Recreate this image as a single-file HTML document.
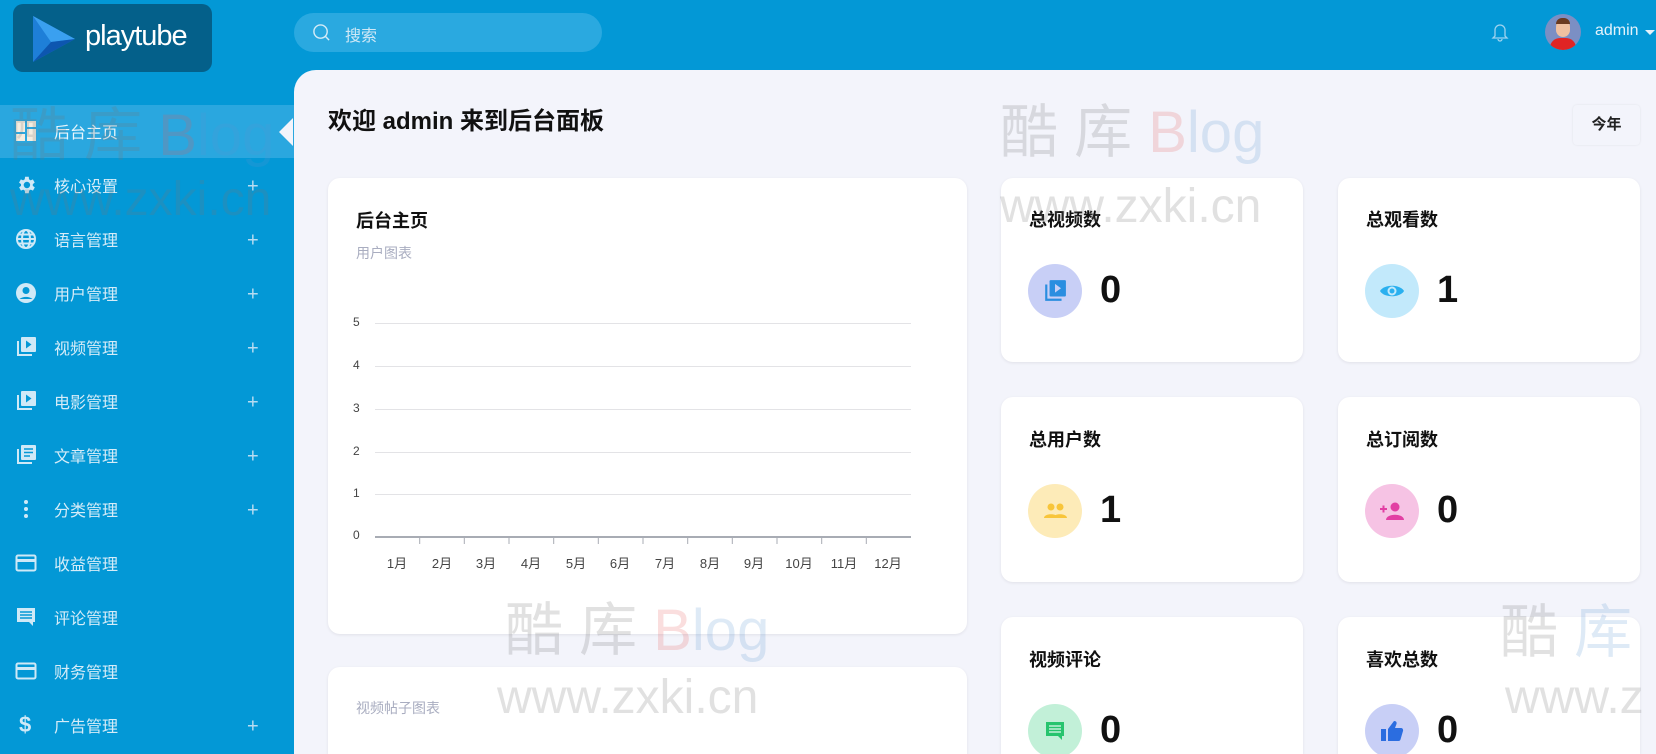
<!DOCTYPE html>
<html><head><meta charset="utf-8">
<style>
*{box-sizing:border-box;margin:0;padding:0}
html{width:1656px;height:754px;overflow:hidden}
body{width:1656px;height:754px;overflow:hidden;background:#0398d6;font-family:"Liberation Sans","Noto Sans CJK SC",sans-serif;position:relative}
.abs{position:absolute}
.logo{left:13px;top:4px;width:199px;height:68px;background:#04608a;border-radius:10px}
.logo span{position:absolute;left:72px;top:16px;color:#fff;font-size:29px;letter-spacing:-1px}
.search{left:294px;top:13px;width:308px;height:39px;border-radius:20px;background:#2aa9e0}
.search span{position:absolute;left:51px;top:9px;color:#cfe8f6;font-size:16px}
.main{left:294px;top:70px;width:1362px;height:684px;background:#f3f4fb;border-top-left-radius:22px}
.nav{left:0;width:294px;height:54px}
.nav .t{position:absolute;left:54px;top:50%;transform:translateY(-50%);color:#d6ecf8;font-size:16px}
.nav .p{position:absolute;left:247px;top:50%;transform:translateY(-42%);color:#b7dcf1;font-size:20px;font-weight:300;line-height:1}
.nav svg{position:absolute;left:15px;top:50%;transform:translateY(-50%)}
.card{background:#fff;border-radius:12px;box-shadow:0 1px 3px rgba(0,0,0,.08)}
.ct{font-size:18px;font-weight:bold;color:#111}
.ic{width:54px;height:54px;border-radius:50%;display:flex;align-items:center;justify-content:center}
.num{font-size:38px;font-weight:bold;color:#111}
.yl{position:absolute;left:353px;font-size:12px;color:#444}
.gl{position:absolute;left:375px;width:536px;height:1px;background:#e3e3e6}
.ml{position:absolute;top:553px;font-size:13px;color:#444;width:40px;text-align:center}
.wm{position:absolute;color:rgba(120,120,120,.22);font-size:58px;white-space:nowrap;pointer-events:none}
.wm b{font-weight:normal;color:rgba(90,150,210,.2)}
.wm i{font-style:normal;color:rgba(230,90,90,.2)}
</style></head><body>
<div class="abs logo">
<svg class="abs" style="left:16px;top:8px" width="52" height="54" viewBox="0 0 52 54"><path d="M4 4 L46 27 L4 50 Z" fill="#1e7fd8"/><path d="M4 4 L46 27 L22 30 Z" fill="#3aa0f0"/><path d="M4 50 L22 30 L46 27Z" fill="#0d56b0"/></svg>
<span>playtube</span></div>
<div class="abs search"><svg class="abs" style="left:18px;top:10px" width="19" height="19" viewBox="0 0 20 20"><circle cx="9" cy="9" r="7" fill="none" stroke="#d4ebf7" stroke-width="1.5"/><path d="M14 14l4 4" stroke="#d4ebf7" stroke-width="1.5"/></svg><span>搜索</span></div>
<svg class="abs" style="left:1491px;top:22px" width="18" height="20" viewBox="0 0 18 20"><path d="M4 14V8a5 5 0 0110 0v6l2 2H2z M7 17a2 2 0 004 0" fill="none" stroke="#9fd3ef" stroke-width="1.3"/></svg>
<div class="abs" style="left:1545px;top:14px;width:36px;height:36px;border-radius:50%;background:#7b8fc4;overflow:hidden"><div class="abs" style="left:11px;top:6px;width:14px;height:17px;border-radius:7px;background:#f0c0a0"></div><div class="abs" style="left:11px;top:4px;width:14px;height:6px;border-radius:6px 6px 0 0;background:#6b3a20"></div><div class="abs" style="left:5px;top:24px;width:26px;height:16px;border-radius:10px 10px 0 0;background:#e02424"></div></div>
<div class="abs" style="left:1595px;top:22px;color:#e3f2fb;font-size:16px">admin</div>
<div class="abs" style="left:1645px;top:30px;border:5px solid transparent;border-top-color:#e3f2fb;border-bottom:0"></div>

<div class="abs main"></div>
<div class="abs" style="left:0;top:105px;width:294px;height:53px;background:#2aa7df"></div>
<div class="abs" style="left:279px;top:118px;border:14px solid transparent;border-right-color:#f3f4fb;border-left:0;height:0"></div>

<div class="abs nav" style="top:104px"><svg width="22" height="22" viewBox="0 0 22 22"><rect x="1" y="1" width="9" height="11" fill="#f4ede0"/><rect x="12" y="1" width="9" height="6" fill="#f4ede0"/><rect x="1" y="14" width="9" height="7" fill="#f4ede0"/><rect x="12" y="9" width="9" height="12" fill="#f4ede0"/></svg><span class="t" style="color:#eaf6fc">后台主页</span></div>
<div class="abs nav" style="top:158px"><svg width="22" height="22" viewBox="0 0 24 24"><path fill="#cfe9f7" d="M19.4 13a7.5 7.5 0 000-2l2.1-1.6-2-3.5-2.5 1a7 7 0 00-1.7-1L15 3h-4l-.4 2.9a7 7 0 00-1.7 1l-2.5-1-2 3.5L6.6 11a7.5 7.5 0 000 2l-2.1 1.6 2 3.5 2.5-1a7 7 0 001.7 1L11 21h4l.4-2.9a7 7 0 001.7-1l2.5 1 2-3.5zM13 15.5a3.5 3.5 0 110-7 3.5 3.5 0 010 7z"/></svg><span class="t">核心设置</span><span class="p">+</span></div>
<div class="abs nav" style="top:212px"><svg width="22" height="22" viewBox="0 0 22 22"><g fill="none" stroke="#cfe9f7" stroke-width="2"><circle cx="11" cy="11" r="9"/><ellipse cx="11" cy="11" rx="4" ry="9"/><path d="M2 11h18M3.5 6.5h15M3.5 15.5h15"/></g></svg><span class="t">语言管理</span><span class="p">+</span></div>
<div class="abs nav" style="top:266px"><svg width="22" height="22" viewBox="0 0 22 22"><circle cx="11" cy="11" r="10" fill="#cfe9f7"/><circle cx="11" cy="8.5" r="3.5" fill="#0398d6"/><path d="M4.5 17a8 5 0 0113 0" fill="#0398d6"/></svg><span class="t">用户管理</span><span class="p">+</span></div>
<div class="abs nav" style="top:320px"><svg width="22" height="22" viewBox="0 0 22 22"><path d="M2 5v15h15v-2H4V5z" fill="#cfe9f7"/><rect x="6" y="1" width="15" height="15" rx="1" fill="#cfe9f7"/><path d="M11 4.5v8l5.5-4z" fill="#0398d6"/></svg><span class="t">视频管理</span><span class="p">+</span></div>
<div class="abs nav" style="top:374px"><svg width="22" height="22" viewBox="0 0 22 22"><path d="M2 5v15h15v-2H4V5z" fill="#cfe9f7"/><rect x="6" y="1" width="15" height="15" rx="1" fill="#cfe9f7"/><path d="M11 4.5v8l5.5-4z" fill="#0398d6"/></svg><span class="t">电影管理</span><span class="p">+</span></div>
<div class="abs nav" style="top:428px"><svg width="22" height="22" viewBox="0 0 22 22"><path d="M2 5v15h15v-2H4V5z" fill="#cfe9f7"/><rect x="6" y="1" width="15" height="15" rx="1" fill="#cfe9f7"/><path d="M9 5h9M9 8.5h9M9 12h6" stroke="#0398d6" stroke-width="1.6"/></svg><span class="t">文章管理</span><span class="p">+</span></div>
<div class="abs nav" style="top:482px"><svg width="22" height="22" viewBox="0 0 22 22"><circle cx="11" cy="4" r="2" fill="#cfe9f7"/><circle cx="11" cy="11" r="2" fill="#cfe9f7"/><circle cx="11" cy="18" r="2" fill="#cfe9f7"/></svg><span class="t">分类管理</span><span class="p">+</span></div>
<div class="abs nav" style="top:536px"><svg width="22" height="22" viewBox="0 0 22 22"><rect x="1.5" y="3.5" width="19" height="15" rx="1.5" fill="none" stroke="#cfe9f7" stroke-width="2"/><rect x="2" y="7" width="18" height="3" fill="#cfe9f7"/></svg><span class="t">收益管理</span></div>
<div class="abs nav" style="top:590px"><svg width="22" height="22" viewBox="0 0 22 22"><path d="M2 2h18v14h-2v4l-4-4H2z" fill="#cfe9f7"/><path d="M5 6h12M5 9h12M5 12h12" stroke="#0398d6" stroke-width="1.5"/></svg><span class="t">评论管理</span></div>
<div class="abs nav" style="top:644px"><svg width="22" height="22" viewBox="0 0 22 22"><rect x="1.5" y="3.5" width="19" height="15" rx="1.5" fill="none" stroke="#cfe9f7" stroke-width="2"/><rect x="2" y="7" width="18" height="3" fill="#cfe9f7"/></svg><span class="t">财务管理</span></div>
<div class="abs nav" style="top:698px"><span class="abs" style="left:19px;top:50%;transform:translateY(-50%);color:#cfe9f7;font-size:22px;font-weight:bold">$</span><span class="t">广告管理</span><span class="p">+</span></div>

<div class="abs" style="left:328px;top:101px;font-size:24px;font-weight:bold;color:#111">欢迎 admin 来到后台面板</div>
<div class="abs" style="left:1573px;top:105px;width:67px;height:40px;background:#f3f4fb;border-radius:4px;box-shadow:0 0 2px rgba(0,0,0,.08);text-align:center;line-height:40px;font-size:15px;font-weight:bold;color:#222">今年</div>

<div class="abs card" style="left:328px;top:178px;width:639px;height:456px"></div>
<div class="abs ct" style="left:356px;top:207px">后台主页</div>
<div class="abs" style="left:356px;top:243px;font-size:14px;color:#a9adc0">用户图表</div>
<div class="gl" style="top:323px"></div><div class="yl" style="top:315px">5</div>
<div class="gl" style="top:366px"></div><div class="yl" style="top:358px">4</div>
<div class="gl" style="top:409px"></div><div class="yl" style="top:401px">3</div>
<div class="gl" style="top:452px"></div><div class="yl" style="top:444px">2</div>
<div class="gl" style="top:494px"></div><div class="yl" style="top:486px">1</div>
<div class="gl" style="top:536px;height:2px;background:#a8acb4"></div><div class="yl" style="top:528px">0</div>
<svg class="abs" style="left:375px;top:537px" width="537" height="8"><g stroke="#a8acb4" stroke-width="1"><path d="M44.7 0v7M89.3 0v7M134 0v7M178.7 0v7M223.3 0v7M268 0v7M312.7 0v7M357.3 0v7M402 0v7M446.7 0v7M491.3 0v7"/></g></svg>
<div class="ml" style="left:377px">1月</div><div class="ml" style="left:422px">2月</div><div class="ml" style="left:466px">3月</div><div class="ml" style="left:511px">4月</div><div class="ml" style="left:556px">5月</div><div class="ml" style="left:600px">6月</div><div class="ml" style="left:645px">7月</div><div class="ml" style="left:690px">8月</div><div class="ml" style="left:734px">9月</div><div class="ml" style="left:779px">10月</div><div class="ml" style="left:824px">11月</div><div class="ml" style="left:868px">12月</div>

<div class="abs card" style="left:328px;top:667px;width:639px;height:87px;border-radius:12px 12px 0 0"></div>
<div class="abs" style="left:356px;top:698px;font-size:14px;color:#a9adc0">视频帖子图表</div>

<div class="abs card" style="left:1001px;top:178px;width:302px;height:184px"></div>
<div class="abs card" style="left:1338px;top:178px;width:302px;height:184px"></div>
<div class="abs card" style="left:1001px;top:397px;width:302px;height:185px"></div>
<div class="abs card" style="left:1338px;top:397px;width:302px;height:185px"></div>
<div class="abs card" style="left:1001px;top:617px;width:302px;height:137px;border-radius:12px 12px 0 0"></div>
<div class="abs card" style="left:1338px;top:617px;width:302px;height:137px;border-radius:12px 12px 0 0"></div>

<div class="abs ct" style="left:1029px;top:206px">总视频数</div>
<div class="abs ic" style="left:1028px;top:264px;background:#c8cff6"><svg width="24" height="24" viewBox="0 0 22 22"><path d="M2 5v15h15v-2H4V5z" fill="#2a8ee0"/><rect x="6" y="1" width="15" height="15" rx="1" fill="#2a8ee0"/><path d="M11 4.5v8l5.5-4z" fill="#c8cff6"/></svg></div>
<div class="abs num" style="left:1100px;top:269px">0</div>

<div class="abs ct" style="left:1366px;top:206px">总观看数</div>
<div class="abs ic" style="left:1365px;top:264px;background:#c2e9fb"><svg width="26" height="18" viewBox="0 0 26 18"><path d="M1 9C5 2 21 2 25 9C21 16 5 16 1 9z" fill="#2ab0ef"/><circle cx="13" cy="9" r="4.5" fill="#c2e9fb"/><circle cx="13" cy="9" r="2.5" fill="#2ab0ef"/></svg></div>
<div class="abs num" style="left:1437px;top:269px">1</div>

<div class="abs ct" style="left:1029px;top:426px">总用户数</div>
<div class="abs ic" style="left:1028px;top:484px;background:#fdebb8"><svg width="26" height="18" viewBox="0 0 26 18"><circle cx="9" cy="5" r="3.5" fill="#f8c53a"/><circle cx="18" cy="5" r="3.5" fill="#f8c53a"/><path d="M2 16c0-5 14-5 14 0zM11 16c0-5 14-5 14 0z" fill="#f8c53a"/></svg></div>
<div class="abs num" style="left:1100px;top:489px">1</div>

<div class="abs ct" style="left:1366px;top:426px">总订阅数</div>
<div class="abs ic" style="left:1365px;top:484px;background:#f6c3e4"><svg width="26" height="20" viewBox="0 0 26 20"><circle cx="16" cy="6" r="4.5" fill="#e23fa3"/><path d="M7 19c0-7 18-7 18 0z" fill="#e23fa3"/><path d="M1 8h7M4.5 4.5v7" stroke="#e23fa3" stroke-width="2"/></svg></div>
<div class="abs num" style="left:1437px;top:489px">0</div>

<div class="abs ct" style="left:1029px;top:646px">视频评论</div>
<div class="abs ic" style="left:1028px;top:704px;background:#c2f0d8"><svg width="22" height="22" viewBox="0 0 22 22"><path d="M2 2h18v14h-2v4l-4-4H2z" fill="#27c46e"/><path d="M5 6h12M5 9h12M5 12h12" stroke="#c2f0d8" stroke-width="1.5"/></svg></div>
<div class="abs num" style="left:1100px;top:709px">0</div>

<div class="abs ct" style="left:1366px;top:646px">喜欢总数</div>
<div class="abs ic" style="left:1365px;top:704px;background:#c8cff6"><svg width="24" height="22" viewBox="0 0 24 22"><rect x="1" y="9" width="5" height="12" fill="#2b6de0"/><path d="M8 9l6-8c2 0 3 1 2.5 3L15 8h6c1.5 0 2.5 1.5 2 3l-2.5 8.5c-.3 1-1 1.5-2 1.5H8z" fill="#2b6de0"/></svg></div>
<div class="abs num" style="left:1437px;top:709px">0</div>

<div class="wm" style="left:10px;top:88px">酷 库 <i>B</i><b>log</b></div>
<div class="wm" style="left:10px;top:172px;font-size:48px">www.zxki.cn</div>
<div class="wm" style="left:1000px;top:85px">酷 库 <i>B</i><b>log</b></div>
<div class="wm" style="left:1000px;top:179px;font-size:48px">www.zxki.cn</div>
<div class="wm" style="left:505px;top:583px">酷 库 <i>B</i><b>log</b></div>
<div class="wm" style="left:497px;top:670px;font-size:48px">www.zxki.cn</div>
<div class="wm" style="left:1500px;top:585px">酷 <b>库</b></div>
<div class="wm" style="left:1505px;top:670px;font-size:48px">www.z</div>
</body></html>
